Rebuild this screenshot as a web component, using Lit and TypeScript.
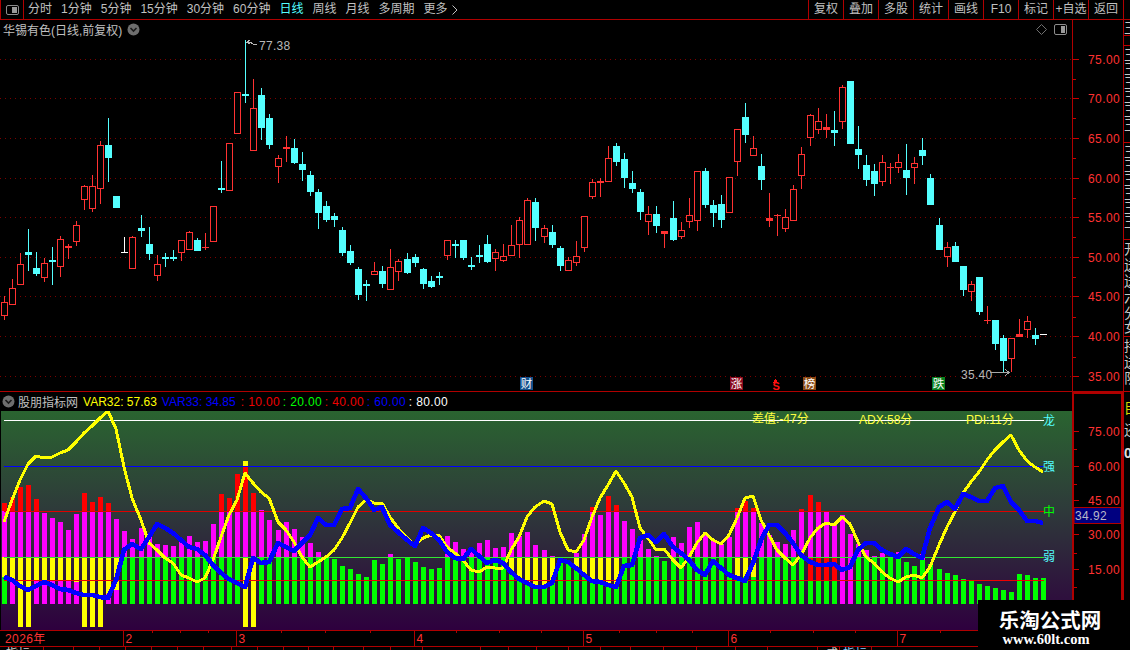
import { LitElement, html, css, svg, unsafeCSS } from 'lit';
import { customElement } from 'lit/decorators.js';

// page coordinates are used for every chart, each svg just gets a viewBox offset
const RED = '#ff3232';
const CYAN = '#54ffff';
const slot = (i: number) => Math.floor(4 + i * 8.0606);

// type (r red, c cyan, w white), body top, body bottom, wick top, wick bottom
const candles: [string, number, number, number, number][] = [
  ['r', 302, 316, 296, 320], ['r', 288, 305, 279, 305], ['r', 264, 285, 253, 285], ['c', 252, 255, 229, 271],
  ['c', 268, 274, 252, 276], ['r', 263, 278, 258, 282], ['c', 260, 262, 247, 285], ['r', 239, 267, 236, 277],
  ['r', 246, 248, 244, 259], ['r', 225, 242, 221, 246], ['r', 186, 200, 185, 210], ['r', 186, 209, 175, 212],
  ['r', 145, 189, 141, 204], ['c', 145, 158, 118, 182], ['c', 196, 208, 196, 208], ['w', 252, 253, 237, 253],
  ['r', 237, 269, 236, 269], ['c', 228, 231, 215, 237], ['c', 244, 254, 227, 260], ['r', 264, 276, 255, 281],
  ['c', 257, 259, 253, 267], ['c', 257, 259, 250, 261], ['r', 240, 253, 240, 261], ['r', 232, 250, 231, 250],
  ['c', 240, 251, 238, 251], ['r', 247, 248, 233, 250], ['r', 206, 242, 206, 242], ['c', 188, 190, 161, 193],
  ['r', 143, 191, 143, 191], ['r', 92, 134, 92, 134], ['c', 94, 96, 40, 103], ['r', 108, 151, 79, 151],
  ['c', 95, 128, 88, 140], ['c', 118, 145, 114, 149], ['r', 158, 167, 155, 183], ['r', 147, 149, 136, 162],
  ['c', 148, 163, 139, 164], ['c', 164, 170, 152, 181], ['c', 175, 192, 171, 196], ['c', 192, 213, 189, 229],
  ['c', 206, 220, 201, 222], ['c', 216, 220, 213, 227], ['c', 230, 253, 227, 256], ['c', 251, 263, 245, 265],
  ['c', 269, 295, 267, 300], ['c', 284, 286, 280, 301], ['r', 271, 275, 262, 275], ['c', 271, 284, 266, 288],
  ['r', 267, 290, 249, 290], ['r', 261, 272, 259, 281], ['c', 259, 273, 253, 274], ['c', 257, 263, 254, 267],
  ['c', 269, 284, 268, 289], ['c', 281, 287, 276, 288], ['c', 276, 278, 272, 285], ['r', 240, 256, 240, 260],
  ['c', 244, 246, 240, 258], ['c', 240, 258, 240, 260], ['c', 265, 267, 257, 270], ['c', 255, 257, 245, 263],
  ['c', 244, 262, 235, 263], ['r', 252, 259, 249, 271], ['r', 256, 261, 244, 262], ['r', 245, 256, 225, 256],
  ['r', 220, 245, 217, 258], ['r', 200, 245, 198, 245], ['c', 202, 228, 198, 241], ['r', 228, 237, 225, 243],
  ['c', 232, 245, 225, 248], ['c', 248, 266, 246, 271], ['r', 260, 271, 257, 271], ['r', 256, 263, 241, 266],
  ['r', 216, 248, 216, 252], ['r', 182, 197, 179, 199], ['r', 181, 183, 178, 197], ['r', 158, 182, 146, 182],
  ['c', 146, 162, 143, 166], ['c', 159, 178, 153, 188], ['c', 183, 189, 171, 193], ['c', 192, 212, 189, 220],
  ['r', 214, 222, 206, 235], ['c', 214, 226, 206, 233], ['r', 231, 234, 231, 248], ['c', 218, 240, 201, 241],
  ['r', 230, 237, 222, 239], ['r', 215, 222, 198, 228], ['r', 171, 221, 171, 231], ['c', 171, 205, 168, 208],
  ['c', 205, 213, 200, 227], ['c', 204, 220, 195, 228], ['r', 177, 213, 177, 213], ['r', 129, 162, 129, 176],
  ['c', 117, 135, 103, 143], ['r', 148, 156, 136, 156], ['c', 166, 180, 154, 190], ['r', 218, 221, 193, 227],
  ['r', 215, 216, 214, 236], ['r', 217, 229, 209, 232], ['r', 189, 221, 185, 221], ['r', 154, 176, 147, 189],
  ['r', 115, 138, 114, 146], ['r', 121, 130, 108, 134], ['r', 127, 130, 114, 138], ['c', 130, 133, 111, 146],
  ['r', 87, 122, 85, 129], ['c', 81, 144, 81, 144], ['c', 149, 155, 126, 169], ['c', 165, 180, 155, 186],
  ['c', 171, 184, 164, 196], ['r', 162, 182, 155, 186], ['r', 167, 168, 163, 184], ['r', 162, 168, 154, 173],
  ['c', 170, 178, 144, 195], ['r', 163, 168, 157, 184], ['c', 150, 156, 138, 165], ['c', 178, 205, 174, 205],
  ['c', 225, 250, 218, 250], ['r', 247, 257, 242, 267], ['c', 246, 262, 242, 262], ['c', 266, 290, 266, 296],
  ['r', 284, 292, 281, 301], ['c', 277, 312, 277, 315], ['r', 320, 321, 306, 324], ['c', 320, 344, 320, 350],
  ['c', 338, 361, 335, 372], ['r', 338, 359, 338, 372], ['r', 334, 337, 319, 337], ['r', 321, 330, 316, 338],
  ['c', 335, 339, 328, 345], ['w', 334, 335, 334, 335],
];

const mags = [
  511, 511, 511, 511, 511, 513, 518, 522, 530, 514, 511, 511, 511, 511, 519, 531, 539, 528, 535, 544,
  545, 546, 542, 536, 542, 541, 524, 511, 511, 511, 511, 511, 510, 520, 530, 522, 529, 537, 543, 552,
  0, 0, 0, 0, 0, 0, 0, 0, 554, 0, 0, 0, 0, 0, 0, 536, 542, 549, 550, 543,
  540, 548, 547, 533, 536, 532, 545, 550, 556, 0, 0, 553, 534, 511, 515, 511, 511, 521, 529, 540,
  549, 556, 0, 537, 543, 527, 522, 533, 540, 544, 537, 511, 511, 511, 523, 535, 542, 544, 530, 511,
  511, 511, 511, 524, 515, 534, 544, 550, 556, 553, 0, 552, 0, 0, 554, 0, 0, 0, 0, 0,
  0, 0, 0, 0, 0, 0, 0, 0, 0, 0,
];
const greens = [
  577, 0, 0, 0, 0, 0, 0, 0, 0, 0, 0, 0, 0, 0, 0, 557, 557, 557, 557, 557,
  557, 557, 557, 557, 557, 557, 557, 557, 557, 557, 557, 557, 557, 557, 557, 557, 557, 557, 557, 557,
  557, 559, 566, 569, 574, 577, 560, 564, 557, 559, 557, 562, 567, 569, 568, 557, 557, 557, 557, 557,
  557, 557, 557, 573, 580, 585, 588, 588, 580, 558, 563, 570, 577, 582, 583, 585, 585, 557, 557, 557,
  557, 557, 561, 557, 557, 557, 557, 557, 557, 557, 557, 577, 577, 577, 557, 557, 557, 557, 557, 557,
  580, 580, 580, 580, 0, 0, 557, 557, 557, 557, 557, 557, 562, 566, 560, 564, 569, 573, 575, 579,
  581, 584, 586, 588, 590, 592, 574, 575, 578, 578,
];
// yellow runs down from the 20 line to these, low end of the column
const yellowEnds: Record<number, number> = {
  0: 577, 1: 580, 2: 627, 3: 627, 4: 580, 5: 580, 6: 580, 7: 580, 8: 580, 9: 582, 10: 627, 11: 627, 12: 627,
  13: 594, 14: 590, 30: 627, 31: 627, 63: 573, 64: 580, 65: 585, 66: 588, 67: 588, 68: 580, 71: 570, 72: 577,
  73: 582, 74: 583, 75: 585, 76: 585, 91: 577, 92: 577, 93: 577,
};
const redTops: Record<number, number> = {
  0: 503, 1: 497, 2: 487, 3: 485, 4: 499, 10: 493, 11: 502, 12: 497, 13: 503, 27: 494, 28: 498, 29: 474, 30: 467,
  31: 493, 73: 507, 75: 496, 76: 505, 91: 508, 92: 501, 93: 508, 99: 509, 100: 495, 101: 502,
};
const lowReds = [100, 101, 102, 103];

const yellowLine = [
  522, 500, 480, 464, 456, 458, 457, 453, 450, 442, 433, 426, 418, 411, 429, 467, 498, 520, 543, 550,
  558, 563, 575, 578, 582, 578, 560, 537, 515, 500, 473, 483, 492, 498, 522, 530, 542, 557, 567, 562,
  557, 550, 538, 523, 507, 500, 503, 503, 517, 528, 538, 545, 538, 535, 535, 547, 553, 560, 570, 572,
  567, 568, 568, 550, 537, 517, 507, 501, 504, 532, 550, 552, 540, 517, 498, 485, 471, 483, 497, 528,
  538, 550, 549, 560, 568, 557, 543, 533, 540, 544, 535, 518, 498, 496, 520, 535, 550, 558, 565, 555,
  538, 528, 523, 525, 517, 524, 542, 557, 563, 572, 578, 582, 577, 575, 578, 567, 545, 527, 512, 493,
  482, 472, 460, 450, 442, 435, 450, 461, 467, 472,
];
const blueLine = [
  577, 580, 586, 590, 586, 582, 585, 589, 590, 593, 595, 595, 597, 598, 580, 550, 544, 549, 537, 524,
  528, 533, 540, 547, 549, 555, 565, 573, 579, 583, 587, 558, 563, 562, 543, 547, 551, 543, 535, 518,
  525, 525, 509, 508, 489, 498, 510, 507, 525, 532, 540, 546, 528, 533, 540, 552, 558, 559, 549, 556,
  563, 560, 563, 572, 579, 583, 587, 587, 583, 560, 562, 568, 575, 581, 582, 585, 587, 566, 565, 538,
  535, 542, 534, 547, 553, 560, 570, 575, 561, 568, 575, 578, 581, 563, 540, 525, 525, 533, 543, 555,
  562, 565, 565, 564, 570, 567, 550, 543, 543, 550, 554, 557, 549, 554, 558, 528, 507, 502, 509, 494,
  497, 501, 501, 488, 486, 502, 510, 521, 521, 523,
];

const points = (ys: number[]) => ys.map((y, i) => `${slot(i)},${y}`).join(' ');

const priceTicks = [[75, 59.5], [70, 98.5], [65, 138.5], [60, 178.5], [55, 217.5], [50, 257.5], [45, 296.5], [40, 336.5], [35, 376.5]];
const priceMinor = [79, 118, 158, 198, 237, 277, 317, 357];
const indTicks = [[75, 431.5], [60, 466.5], [45, 500.5], [30, 534.5], [15, 569.5]];
const indMinor = [449, 484, 518, 553, 587];

const hLines = [[420, '#ffffff'], [466.5, '#0000ff'], [511, '#e00000'], [557.5, '#33e633'], [580.5, '#f00000']] as [number, string][];
const hMarks = [[1043, 425, '龙', 'cy'], [1043, 471, '强', 'cy'], [1043, 516, '中', 'gr'], [1043, 561, '弱', 'cy']];

const months = [[123.5, '2'], [236.5, '3'], [414.5, '4'], [583.5, '5'], [728.5, '6'], [897.5, '7']] as [number, string][];
const topTicks = [152, 180, 208, 281, 325, 370, 456, 499, 541, 619, 656, 692, 770, 813, 855, 940];
const lowTicks = [43, 73, 99, 125, 151, 177, 203, 231, 257, 283, 308, 333, 363, 390, 422, 480, 508, 536, 568, 600, 630, 663, 696, 735, 767, 817, 839, 871];

const leftTabs = ['分时', '1分钟', '5分钟', '15分钟', '30分钟', '60分钟', '日线', '周线', '月线', '多周期'];
const rightTabs = ['复权', '叠加', '多股', '统计', '画线', 'F10', '标记', '+自选', '返回'];

// the list panel on the right is cut by the window edge, only its first column shows
const stripLines = [35, 45, 142, 239, 336, 391];
const stripChars: [number, string, string][] = [
  ...[33, 60, 74, 88, 102, 116, 130].map((y) => [y, '王', 'st'] as [number, string, string]),
  ...[157, 171, 185, 199, 213, 227].map((y) => [y, '王', 'st'] as [number, string, string]),
  ...[254, 270, 286, 302, 318, 332].map((y, i) => [y, '开送送六分女'[i], 'st'] as [number, string, string]),
  ...[351, 367, 383].map((y, i) => [y, '持送队'[i], 'st'] as [number, string, string]),
  [413, '目', 'sy'], [435, '还', 'st'], [458, '0', 'sz'],
];

@customElement('app-root')
export class AppRoot extends LitElement {
  static override styles = css`
    :host {
      display: block;
      position: relative;
      width: 1130px;
      height: 650px;
      overflow: hidden;
      background: #000;
      color: #c0c0c0;
      font-family: 'Liberation Sans', 'Noto Sans CJK SC', sans-serif;
      font-size: 12px;
    }
    svg {
      display: block;
    }
    .toolbar {
      display: flex;
      height: 19px;
      border-bottom: 1px solid #b00000;
      line-height: 19px;
    }
    .view-btn {
      display: flex;
      align-items: center;
      justify-content: center;
      width: 22px;
      border-left: 1px solid #b00000;
      border-right: 1px solid #b00000;
      margin-right: 4px;
    }
    .tabs {
      display: flex;
      flex: 1;
      gap: 9px;
    }
    .tab {
      white-space: nowrap;
    }
    .tab.on {
      color: ${unsafeCSS(CYAN)};
    }
    .more {
      display: flex;
      align-items: center;
      gap: 4px;
    }
    .cell {
      width: 34px;
      border-left: 1px solid #b00000;
      text-align: center;
      white-space: nowrap;
    }
    .cell.end {
      width: 6px;
    }
    .body {
      display: flex;
      height: 630px;
    }
    .charts {
      flex: none;
      width: 1123px;
    }
    .pane {
      display: flex;
    }
    .plot {
      width: 1072px;
    }
    .pane.main {
      height: 371px;
      border-bottom: 1px solid #b00000;
    }
    .pane.sub {
      height: 238px;
      border-bottom: 1px solid #b00000;
    }
    .axis {
      width: 50px;
      border-left: 1px solid #b00000;
    }
    .axis.boxed {
      box-sizing: border-box;
      width: 51px;
      border: 2px solid #b00000;
    }
    .title {
      display: flex;
      align-items: center;
      height: 19px;
      padding: 0 3px;
      gap: 5px;
    }
    .title .name {
      white-space: nowrap;
    }
    .spacer {
      flex: 1;
    }
    .head {
      display: flex;
      align-items: center;
      height: 19px;
      padding-left: 2px;
      white-space: nowrap;
    }
    .head .ind-name {
      margin: 0 5px 0 3px;
    }
    .head .val {
      margin-right: 5px;
    }
    .head .lvl {
      width: 42px;
      letter-spacing: 0.4px;
    }
    .ye { color: #ffff00; }
    .bl { color: #0000ff; }
    .re { color: #f00000; }
    .gr { color: #00ff00; }
    .wh { color: #ffffff; }
    .strip {
      flex: none;
      width: 6px;
      border-left: 1px solid #b00000;
    }
    text.st { fill: #c8c8c8; font-size: 14px; }
    text.sy { fill: #d8d800; font-size: 14px; }
    text.sz { fill: #e0e0e0; font-size: 14px; font-weight: bold; }
    text.px { fill: ${unsafeCSS(RED)}; font-size: 12px; letter-spacing: 0.4px; }
    text.hi { fill: #b8b8b8; font-size: 12px; letter-spacing: 0.3px; }
    text.note { fill: #ffff40; font-size: 12px; }
    text.cy { fill: ${unsafeCSS(CYAN)}; font-size: 12px; }
    text.gr { fill: #00ff00; font-size: 12px; }
    text.tag { fill: #fff; font-size: 11.5px; }
    text.dol { fill: #ff1010; font-size: 11px; font-weight: bold; }
    text.box-val { fill: #b8b8c8; font-size: 12px; letter-spacing: 0.4px; }
    text.low { fill: #d0d0d0; font-size: 12px; }
    text.low.ice { fill: #88ccff; }
    .badge {
      position: absolute;
      right: 0;
      bottom: 0;
      display: flex;
      flex-direction: column;
      align-items: center;
      box-sizing: border-box;
      width: 152px;
      height: 50px;
      padding: 7px 8px 0 0;
      background: #000;
      color: #fff;
    }
    .badge .cn {
      font-family: 'Noto Sans CJK SC', sans-serif;
      font-size: 20.5px;
      font-weight: bold;
      line-height: 24px;
    }
    .badge .en {
      margin-right: 8px;
      font-family: 'Liberation Serif', serif;
      font-size: 14.5px;
      font-weight: bold;
      line-height: 16px;
    }
  `;

  private renderCandle(c: [string, number, number, number, number], i: number) {
    const [kind, top, bottom, wickTop, wickBottom] = c;
    const x = slot(i);
    const color = kind === 'r' ? RED : kind === 'c' ? CYAN : '#ffffff';
    const doji = bottom - top <= 3;
    const wick = svg`<path d="M${x + 0.5} ${wickTop}V${wickBottom}" stroke=${color} fill="none"></path>`;
    if (doji) {
      const w = 3;
      return svg`${wick}<rect x=${x - w} y=${top} width=${w * 2 + 1} height=${Math.max(bottom - top, 1)} fill=${color}></rect>`;
    }
    if (kind === 'r') {
      return svg`${wick}<rect x=${x - 2.5} y=${top + 0.5} width="6" height=${bottom - top - 1} fill="#000" stroke=${color}></rect>`;
    }
    return svg`${wick}<rect x=${x - 3} y=${top} width="7" height=${bottom - top} fill=${color}></rect>`;
  }

  private renderBars() {
    return mags.map((mag, i) => {
      const x = slot(i) - 2;
      const green = greens[i];
      const end = yellowEnds[i];
      const red = redTops[i];
      return svg`
        ${mag ? svg`<rect x=${x} y=${mag} width="5" height=${604 - mag} fill="#ff00ff"></rect>` : ''}
        ${green ? svg`<rect x=${x} y=${green} width="5" height=${604 - green} fill="#00ff00"></rect>` : ''}
        ${end ? svg`<rect x=${x} y="557" width="5" height=${end - 557} fill="#ffff00"></rect>` : ''}
        ${red ? svg`<rect x=${x} y=${red} width="5" height=${511 - red} fill="#ff0000"></rect>` : ''}
        ${lowReds.includes(i) ? svg`<rect x=${x} y="557" width="5" height="23" fill="#ff0000"></rect>` : ''}
      `;
    });
  }

  private renderMainPlot() {
    return html`<svg width="1072" height="352" viewBox="0 39 1072 352" shape-rendering="crispEdges">
      ${priceTicks.map(([, y]) => svg`<path d="M0 ${y}H1072" stroke="#7c0000" stroke-dasharray="1 4"></path>`)}
      ${candles.map((c, i) => this.renderCandle(c, i))}
      <path d="M257 45L253 44L250 42L247 43M250 40L246.5 42.5L250 44" fill="none" stroke="#b8b8b8"></path>
      <text class="hi" x="259" y="50">77.38</text>
      <text class="hi" x="961" y="379">35.40</text>
      <path d="M990 372.5H1009M1005 369.5L1009.5 372.5L1005 375.5" fill="none" stroke="#a8a8a8"></path>
      ${[[520, '财', '#14508c'], [730, '涨', '#8a0a1e'], [803, '榜', '#8a4a14'], [932, '跌', '#0a8020']].map(
        ([x, label, bg]) => svg`<rect x=${x} y="377" width="13" height="13" fill=${bg}></rect>
          <text class="tag" x=${(x as number) + 0.75} y="388">${label}</text>`,
      )}
      <path d="M775.5 379L778 382.5H773Z" fill="#ff1010"></path>
      <text class="dol" x="772.5" y="390">S</text>
    </svg>`;
  }

  private renderAxis(ticks: number[][], minor: number[], height: number, top: number) {
    return svg`<svg width="48" height=${height} viewBox="1073 ${top} 48 ${height}">
      ${ticks.map(
        ([v, y]) => svg`<path d="M1073 ${y}H1079" stroke="#c80000"></path>
          <text class="px" x="1088" y=${y + 4.5}>${v}.00</text>`,
      )}
      ${minor.map((y) => svg`<path d="M1073 ${y + 0.5}H1076" stroke="#c80000"></path>`)}
    </svg>`;
  }

  private renderIndicator() {
    return html`<svg width="1072" height="219" viewBox="0 411 1072 219">
      <defs>
        <linearGradient id="fade" x1="0" y1="0" x2="0" y2="1">
          <stop offset="0" stop-color="#2a6430"></stop>
          <stop offset="0.45" stop-color="#2e3a3a"></stop>
          <stop offset="1" stop-color="#2e003e"></stop>
        </linearGradient>
      </defs>
      <rect x="1" y="411" width="1071" height="219" fill="url(#fade)"></rect>
      <g shape-rendering="crispEdges">
        ${this.renderBars()}
        <rect x="243" y="461" width="5" height="6" fill="#ffff00"></rect>
        ${hLines.map(([y, c]) => svg`<path d="M4 ${y}H1044" stroke=${c} fill="none"></path>`)}
        <polyline points=${points(yellowLine)} fill="none" stroke="#ffff00" stroke-width="3" stroke-linejoin="round"></polyline>
        <polyline points=${points(blueLine)} fill="none" stroke="#0000ff" stroke-width="4.6" stroke-linejoin="round"></polyline>
      </g>
      <text class="note" x="752" y="423">差值:-47分</text>
      <text class="note" x="859" y="424">ADX:58分</text>
      <text class="note" x="966" y="424">PDI:11分</text>
      ${hMarks.map(([x, y, t, cls]) => svg`<text class=${cls} x=${x} y=${y}>${t}</text>`)}
    </svg>`;
  }

  private renderTimeAxis() {
    return html`<svg width="1123" height="19" viewBox="0 631 1123 19" shape-rendering="crispEdges">
      ${topTicks.map((x) => svg`<path d="M${x + 0.5} 631V633" stroke="#b00000"></path>`)}
      ${months.map(
        ([x, m]) => svg`<path d="M${x} 631V646" stroke="#b00000"></path>
          <text class="px" x=${x + 2} y="643">${m}</text>`,
      )}
      <text class="px" x="5" y="643">2026年</text>
      <path d="M0 646.5H1123" stroke="#b00000"></path>
      ${lowTicks.map((x) => svg`<path d="M${x + 0.5} 647V650" stroke="#b00000"></path>`)}
      <text class="low" x="6" y="658">指标</text>
      <text class="low" x="826" y="658">成</text>
      <text class="low ice" x="843" y="658">指标</text>
    </svg>`;
  }

  private renderStrip() {
    return html`<svg width="6" height="630" viewBox="1124 20 6 630">
      ${stripLines.map((y) => svg`<path d="M1124 ${y + 0.5}H1130" stroke="#c00000"></path>`)}
      ${stripChars.map(([y, c, cls]) => svg`<text class=${cls} x="1124" y=${y}>${c}</text>`)}
    </svg>`;
  }

  private renderChevron() {
    return html`<svg width="13" height="13" viewBox="0 0 13 13">
      <circle cx="6.5" cy="6.5" r="6" fill="#6e6e6e"></circle>
      <path d="M3.5 5L6.5 8L9.5 5" fill="none" stroke="#1a1a1a" stroke-width="1.6"></path>
    </svg>`;
  }

  override render() {
    return html`
      <div class="toolbar">
        <div class="view-btn">
          <svg width="13" height="10" viewBox="0 0 13 10">
            <rect x="0.5" y="0.5" width="12" height="9" rx="1.5" fill="#000" stroke="#8c8c8c"></rect>
            <rect x="6" y="2" width="5" height="6" fill="#9a9a9a"></rect>
          </svg>
        </div>
        <div class="tabs">
          ${leftTabs.map((t) => html`<span class="tab ${t === '日线' ? 'on' : ''}">${t}</span>`)}
          <span class="tab more">更多
            <svg width="6" height="10" viewBox="0 0 6 10"><path d="M0.5 0.5L5 5L0.5 9.5" fill="none" stroke="#c0c0c0"></path></svg>
          </span>
        </div>
        ${rightTabs.map((t) => html`<span class="cell">${t}</span>`)}
        <span class="cell end"></span>
      </div>
      <div class="body">
        <div class="charts">
          <div class="pane main">
            <div class="plot">
              <div class="title">
                <span class="name">华锡有色(日线,前复权)</span>
                ${this.renderChevron()}
                <span class="spacer"></span>
                <svg width="11" height="11" viewBox="0 0 11 11"><path d="M5.5 0.5L10.5 5.5L5.5 10.5L0.5 5.5Z" fill="none" stroke="#707070"></path></svg>
                <svg width="13" height="11" viewBox="0 0 13 11" style="margin:0 2px 0 2px">
                  <rect x="0.5" y="0.5" width="12" height="10" rx="1.5" fill="#000" stroke="#8c8c8c"></rect>
                  <rect x="7" y="2" width="4" height="7" fill="#9a9a9a"></rect>
                </svg>
              </div>
              ${this.renderMainPlot()}
            </div>
            <div class="axis">${this.renderAxis(priceTicks, priceMinor, 371, 20)}</div>
          </div>
          <div class="pane sub">
            <div class="plot">
              <div class="head">
                ${this.renderChevron()}
                <span class="ind-name">股朋指标网</span>
                <span class="val ye">VAR32: 57.63</span>
                <span class="val bl">VAR33: 34.85</span>
                <span class="lvl re">: 10.00</span>
                <span class="lvl gr">: 20.00</span>
                <span class="lvl re">: 40.00</span>
                <span class="lvl bl">: 60.00</span>
                <span class="lvl wh">: 80.00</span>
              </div>
              ${this.renderIndicator()}
            </div>
            <div class="axis boxed">
              <svg width="47" height="234" viewBox="1074 394 47 234">
                ${indTicks.map(
                  ([v, y]) => svg`<path d="M1074 ${y}H1079" stroke="#c80000"></path>
                    <text class="px" x="1088" y=${y + 4.5}>${v}.00</text>`,
                )}
                ${indMinor.map((y) => svg`<path d="M1074 ${y + 0.5}H1077" stroke="#c80000"></path>`)}
                <rect x="1074" y="507.5" width="47" height="16" fill="#000080" stroke="#b00000"></rect>
                <text class="box-val" x="1075" y="520">34.92</text>
              </svg>
            </div>
          </div>
          ${this.renderTimeAxis()}
        </div>
        <div class="strip">${this.renderStrip()}</div>
      </div>
      <div class="badge">
        <span class="cn">乐淘公式网</span>
        <span class="en">www.60lt.com</span>
      </div>
    `;
  }
}

declare global {
  interface HTMLElementTagNameMap {
    'app-root': AppRoot;
  }
}
